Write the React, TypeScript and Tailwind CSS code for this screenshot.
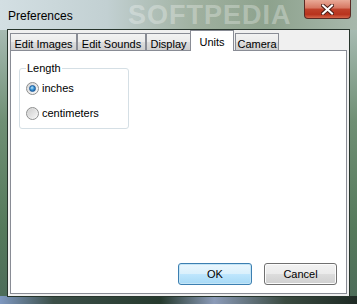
import React from 'react';

const FONT = { fontFamily: '"Liberation Sans", Arial, sans-serif' };

const tabs = [
    { label: 'Edit Images', w: 'w-[67px]' },
    { label: 'Edit Sounds', w: 'w-[69px]' },
    { label: 'Display', w: 'w-[45px]' },
    { label: 'Units', w: 'w-[44px] -ml-px mr-px', active: true },
    { label: 'Camera', w: 'w-[44px]' },
];

function Radio({ checked, label }: { checked?: boolean; label: string }) {
    return (
        <label className="flex items-center h-[13px] gap-[3px] text-[11px] text-black">
            <span className="relative w-[13px] h-[13px] rounded-full border border-[#8e8f8f] bg-[linear-gradient(135deg,#d6d6d6,#fbfbfb)] flex items-center justify-center">
                {checked ? (
                    <span className="w-[7px] h-[7px] rounded-full bg-[radial-gradient(circle_at_40%_35%,#bfe6fb_0%,#3a95d5_45%,#0f4f96_100%)] border border-[#1d5c9c]" />
                ) : (
                    <span className="w-[9px] h-[9px] rounded-full bg-[linear-gradient(135deg,#cfcfcf,#f4f4f4)]" />
                )}
            </span>
            <span>{label}</span>
        </label>
    );
}

export default function App() {
    return (
        <div
            className="relative w-[357px] h-[304px] overflow-hidden bg-[linear-gradient(180deg,#b9c9c6_0%,#6f8f74_40%,#557a5b_75%,#4c6b59_100%)]"
            style={FONT}
        >
            {/* title bar glass */}
            <div className="absolute inset-x-0 top-0 h-[30px] bg-[linear-gradient(90deg,#d3dfe3_0%,#c2d0d2_30%,#9fb09f_55%,#8da28d_75%,#a8b8ac_100%)]" />
            <div className="absolute left-[128px] top-[3px] text-[27px] leading-[24px] font-bold tracking-[1px] text-white/30 pointer-events-none">
                SOFTPEDIA
            </div>
            {/* bottom glass */}
            <div className="absolute inset-x-0 bottom-0 h-[8px] bg-[linear-gradient(90deg,#7e98c0_0%,#3c4f48_15%,#263a2e_45%,#8b9bb8_60%,#3a4a40_80%,#1e2a24_100%)]" />

            <div className="relative flex flex-col h-full">
                {/* title row */}
                <div className="flex h-[29px] items-start">
                    <div className="pl-[8px] pt-[7px] text-[12px] text-black">Preferences</div>
                    <button className="ml-auto mr-[6px] w-[47px] h-[19px] rounded-b-[4px] border border-t-0 border-[#5a2a24] bg-[linear-gradient(180deg,#e9aa97_0%,#d67661_45%,#c0422b_50%,#b8331d_80%,#d4664a_100%)] flex items-center justify-center">
                        <svg width="13" height="11" viewBox="0 0 13 11">
                            <path d="M2 1.5 L11 9.5 M11 1.5 L2 9.5" stroke="#4b1f18" strokeWidth="4" strokeLinecap="square" />
                            <path d="M2 1.5 L11 9.5 M11 1.5 L2 9.5" stroke="#ffffff" strokeWidth="2" strokeLinecap="square" />
                        </svg>
                    </button>
                </div>

                {/* client */}
                <div className="ml-[7px] w-[343px] h-[268px] border border-[#27352c] bg-[#f0f0f0] flex flex-col">
                    {/* tab strip */}
                    <div className="flex items-end h-[20px] pl-[2px]">
                        {tabs.map((t) =>
                            t.active ? (
                                <div
                                    key={t.label}
                                    className={`${t.w} relative z-10 h-[21px] -mb-px bg-white border border-b-0 border-[#898c95] text-[11px] flex justify-center pt-[3px]`}
                                >
                                    {t.label}
                                </div>
                            ) : (
                                <div
                                    key={t.label}
                                    className={`${t.w} h-[17px] bg-[linear-gradient(180deg,#f2f2f2_0%,#ebebeb_50%,#dddddd_51%,#cfcfcf_100%)] border border-b-0 border-[#898c95] text-[11px] flex justify-center pt-[2px]`}
                                >
                                    {t.label}
                                </div>
                            )
                        )}
                    </div>

                    {/* panel */}
                    <div className="ml-[2px] w-[337px] h-[244px] bg-white border border-[#898c95] flex flex-col">
                        <fieldset className="ml-[8px] mt-[11px] w-[110px] h-[67px] border border-[#d5dfe5] rounded-[3px]">
                            <legend className="ml-[6px] px-[1px] text-[11px] leading-[13px]">Length</legend>
                            <div className="flex flex-col gap-[12px] pl-[6px] pt-[7px]">
                                <Radio checked label="inches" />
                                <Radio label="centimeters" />
                            </div>
                        </fieldset>

                        <div className="mt-auto mb-[8px] mr-[9px] flex justify-end gap-[12px]">
                            <button className="w-[74px] h-[22px] rounded-[3px] border border-[#3c7fb1] bg-[linear-gradient(180deg,#eaf6fd_0%,#d9f0fc_50%,#bee6fd_51%,#a7d9f5_100%)] text-[11px] shadow-[inset_0_0_0_1px_#c4e5f6]">
                                OK
                            </button>
                            <button className="w-[73px] h-[22px] rounded-[3px] border border-[#707070] bg-[linear-gradient(180deg,#f2f2f2_0%,#ebebeb_50%,#dddddd_51%,#cfcfcf_100%)] text-[11px] shadow-[inset_0_0_0_1px_#fcfcfc]">
                                Cancel
                            </button>
                        </div>
                    </div>
                </div>
            </div>
        </div>
    );
}
